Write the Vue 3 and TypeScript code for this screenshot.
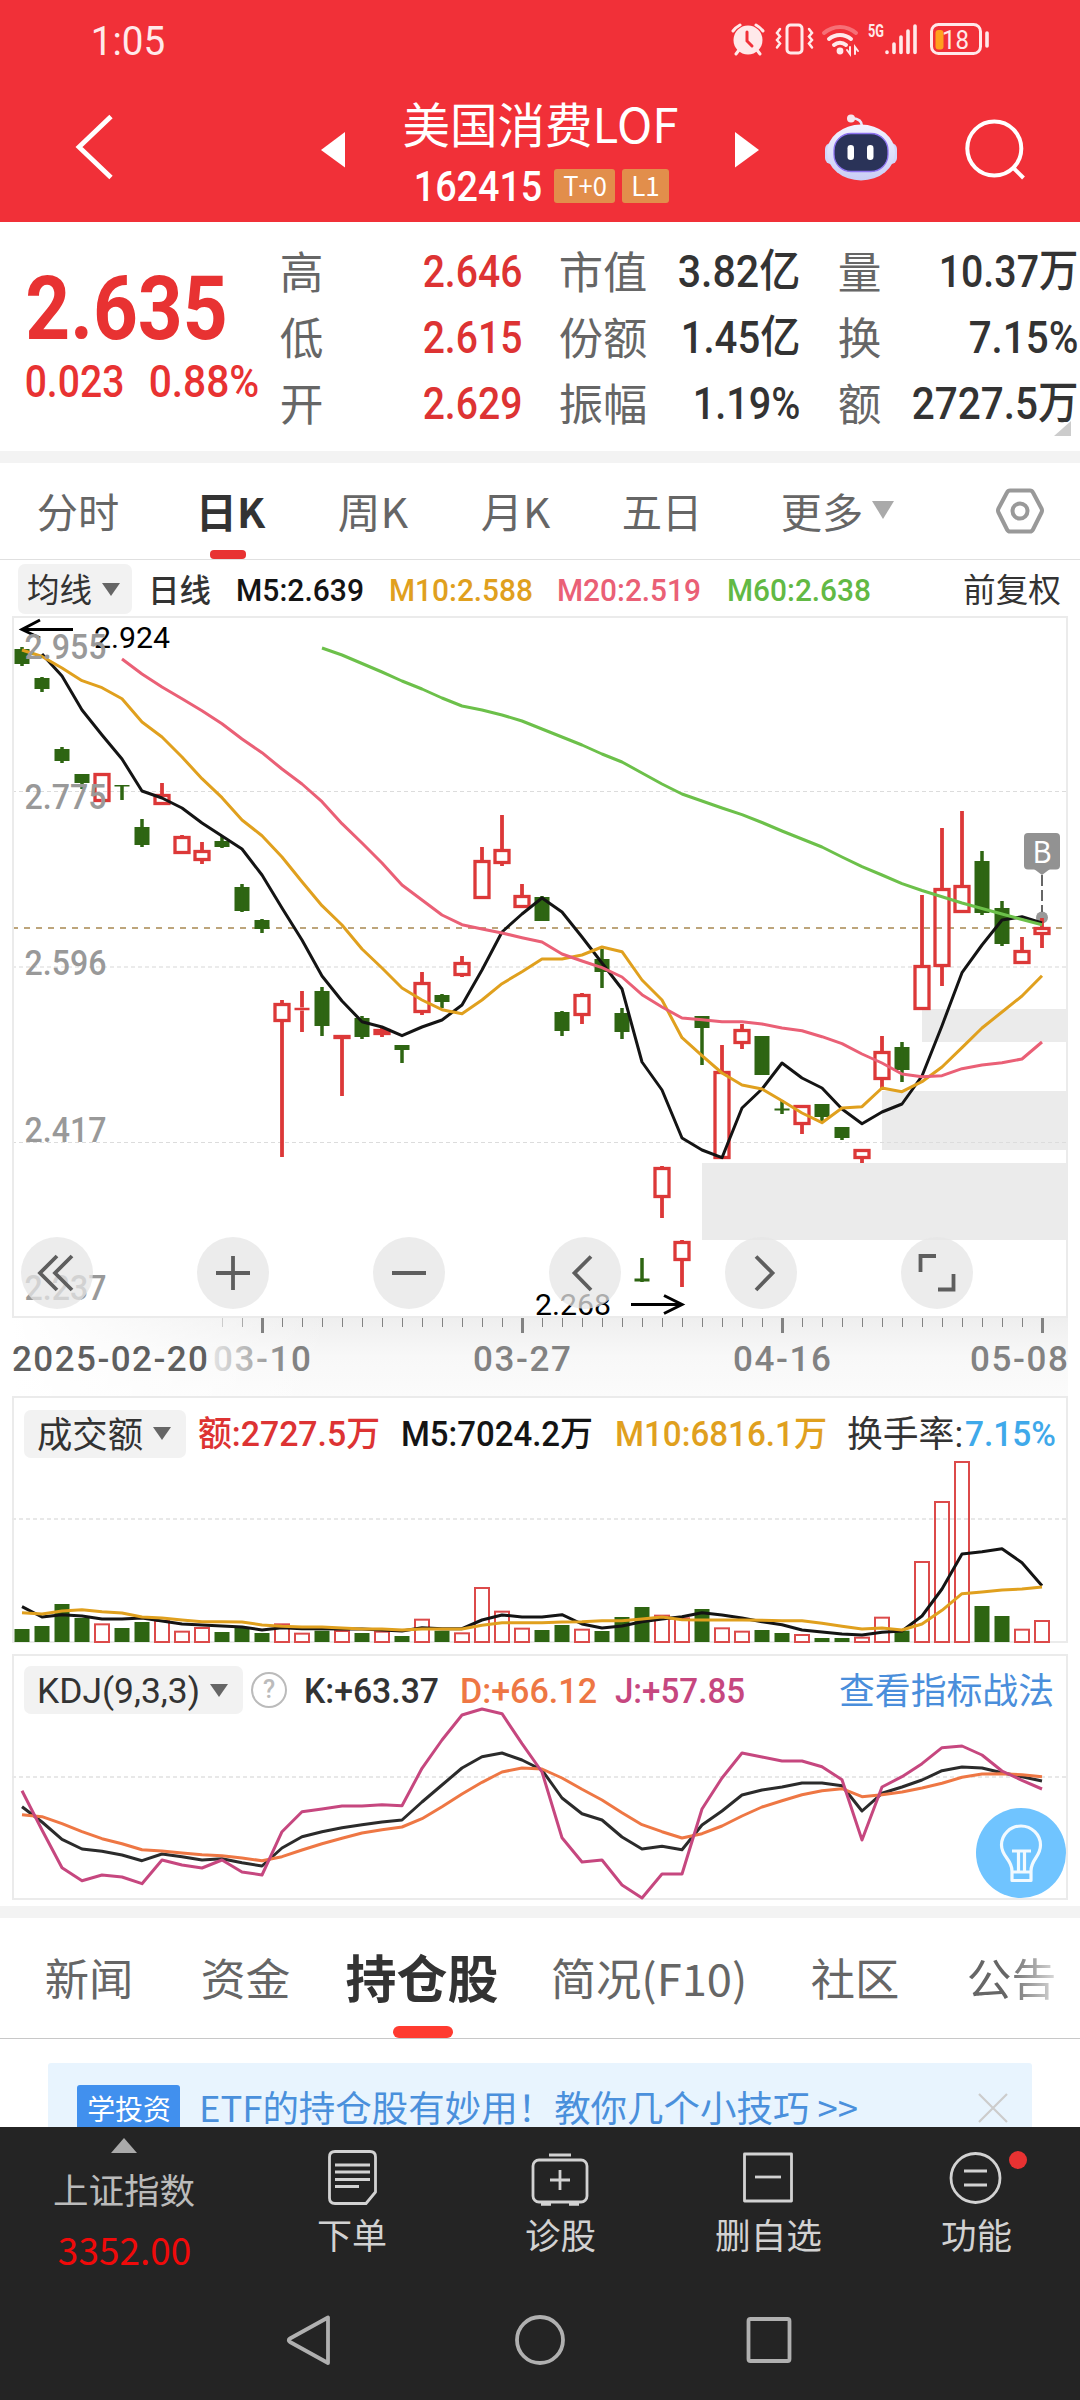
<script setup lang="ts">
import { h } from 'vue'

interface FitProps {
  t: string
  w: number
  s: number
}

// A line of text set to an exact width, like the condensed numerals of the quote face.
const Fit = (props: FitProps) => {
  const height = Math.round(props.s * 1.1)
  const bearing = props.s * 0.03
  // Ideographs sit lower on the line than figures do.
  const ideographic = /[\u4e00-\u9fff]/.test(props.t) && !/[.:]/.test(props.t)
  return h('svg', { class: 'fit', width: props.w, height }, [
    h(
      'text',
      {
        x: -bearing,
        y: height / 2 + props.s * (ideographic ? 0.398 : 0.362),
        'font-size': props.s,
        fill: 'currentColor',
        textLength: props.w + bearing * 2,
        lengthAdjust: 'spacingAndGlyphs',
      },
      props.t,
    ),
  ])
}
Fit.props = ['t', 'w', 's']

const px = (i: number): number => 22 + i * 20

const line = (values: number[], start = 0, base = 0, scale = 1): string =>
  values.map((v, i) => `${px(i + start)},${(base + v / scale).toFixed(1)}`).join(' ')

// [rising, body top, body bottom, high, low]
type Candle = [number, number, number, number, number]
const candles: Candle[] = [
  [0, 649, 664, 647, 666], [0, 678, 689, 677, 692], [0, 749, 761, 747, 763], [0, 774, 783, 774, 789],
  [1, 773, 802, 773, 802], [0, 785, 786.5, 785, 800], [0, 827, 845, 819, 847], [1, 794, 805, 783, 805],
  [1, 836, 854, 835, 854], [1, 850, 861, 842, 864], [0, 841, 847, 836, 848], [0, 887, 911, 884, 912],
  [0, 920, 929, 919, 933], [1, 1003, 1022, 1000, 1157], [1, 1007.5, 1010.5, 991, 1032], [0, 991, 1026, 987, 1036],
  [1, 1035, 1039, 1035, 1096], [0, 1018, 1037, 1016, 1039], [1, 1029, 1035, 1028, 1037], [0, 1045, 1050, 1045, 1063],
  [1, 982, 1013, 972, 1015], [0, 995, 1002, 994, 1008], [1, 962, 976, 956, 977], [1, 860, 899, 847, 899],
  [1, 849, 864, 815, 866], [1, 895, 908, 884, 908], [0, 897, 921, 896, 921], [0, 1012, 1031, 1011, 1036],
  [1, 994, 1016, 993, 1024], [0, 959, 972, 949, 988], [0, 1013, 1032, 1008, 1039], [0, 1278.5, 1281.5, 1258, 1282],
  [1, 1167, 1198, 1166, 1218], [1, 1241, 1261, 1240, 1287], [0, 1016, 1028, 1016, 1065], [1, 1071, 1159, 1045, 1159],
  [1, 1029, 1044, 1024, 1049], [0, 1036, 1075, 1036, 1075], [0, 1108.5, 1110.5, 1100, 1114], [1, 1105, 1125, 1105, 1134],
  [0, 1104, 1117, 1104, 1121], [0, 1127, 1138, 1127, 1140], [1, 1149, 1159, 1149, 1163], [1, 1051, 1080, 1036, 1090],
  [0, 1047, 1070, 1042, 1082], [1, 965, 1010, 895, 1010], [1, 888, 967, 828, 986], [1, 885, 913, 811, 913],
  [0, 861, 913, 851, 915], [0, 908, 944, 901, 946], [1, 950, 964, 937, 964], [1, 927, 935, 918, 948],
]

const ma5 = line([654, 676, 710, 735, 759, 791, 798, 808, 823, 836, 849, 875, 908, 940, 976, 1001, 1021.7, 1027, 1035.7, 1027, 1020, 1005, 970, 932, 914, 898, 912, 937, 963, 989, 1062, 1090, 1138, 1150, 1157.7, 1108, 1089, 1063, 1078, 1088, 1109, 1123.7, 1112, 1104, 1076, 1025.7, 972.7, 945, 920, 916.7, 923], 1)
const ma10 = line([650, 656.5, 668, 680.7, 687.7, 698.7, 722, 737, 757, 778.7, 797.7, 820, 835.7, 857, 881.7, 905.7, 925, 949, 968, 988, 1000, 1009.7, 1013.7, 1000, 983.7, 971.7, 959, 959, 955, 947, 951.7, 980, 1000, 1037.7, 1055.7, 1073, 1085, 1089, 1100.7, 1113, 1122.7, 1108, 1106.7, 1088, 1091.7, 1081.7, 1067, 1047.7, 1028, 1012, 996, 975.7])
const ma20 = line([659, 674, 687, 698.7, 710.7, 723.7, 739, 752.7, 769, 784, 801.7, 823.7, 843, 863, 885, 900, 915, 924.7, 929, 933, 937.7, 942, 954, 961, 967.7, 977, 994.7, 1007, 1018, 1019.7, 1021.7, 1021.7, 1024, 1028, 1030.7, 1036.7, 1043.7, 1054, 1063, 1074, 1076.7, 1075.7, 1068.7, 1065, 1062.7, 1059, 1042], 5)
const ma60 = line([648, 655, 663.5, 672, 681, 689, 698, 706, 710, 715, 721, 729, 737, 745, 754, 762, 773, 784, 794, 801, 808, 814.7, 822.5, 831, 839, 847, 857, 866.7, 875, 883.7, 890.5, 896.7, 903, 908.5, 914, 919.5, 924.7], 15)

const volTops = [717, 708, 642, 684, 700, 714, 696, 690, 722, 711, 726, 714, 729, 700, 728, 722, 720, 729, 722, 738, 686, 722, 727, 591, 662, 713, 720, 705, 716, 723, 681, 651, 674, 682, 657, 712, 722, 720, 729, 732, 744, 744, 740, 680, 722, 513, 333, 213, 648, 678, 716, 690]
const volBase = 1642
const volumes = volTops.map((v, i) => ({ up: candles[i][0] === 1, x: px(i), y: 1390 + v / 3 }))
const vol5 = line([650, 681, 674, 678, 687, 687, 684, 693, 702, 705, 708, 711, 720, 713, 716, 716, 717, 717, 720, 723, 713, 716, 716, 690, 675, 681, 681, 674, 702, 714, 708, 695, 687, 680, 668, 675, 684, 695, 704, 720, 726, 732, 735, 727, 723, 678, 597, 492, 485, 476, 518, 587], 0, 1390, 3)
const vol10 = line([668, 672, 663, 659, 665, 669, 681, 684, 690, 695, 695, 696, 705, 709, 711, 711, 714, 717, 717, 720, 717, 717, 717, 706, 698, 698, 698, 696, 695, 692, 692, 687, 681, 689, 690, 690, 690, 691, 692, 692, 700, 709, 717, 714, 720, 702, 661, 611, 606, 600, 597, 591], 0, 1390, 3)

const kLine = line([470, 516, 568, 597, 604, 615, 632, 612, 620, 630, 626, 638, 648, 594, 560, 545, 533, 524, 516, 510, 456, 405, 354, 320, 309, 330, 360, 444, 491, 510, 561, 597, 589, 599, 525, 483, 435, 420, 411, 399, 399, 407, 483, 430, 411, 390, 362, 351, 354, 368, 380, 393], 0, 1650, 3)
const dLine = line([494, 500, 521, 545, 566, 581, 599, 603, 609, 614, 617, 624, 632, 620, 600, 581, 565, 549, 539, 531, 506, 470, 432, 397, 366, 354, 357, 384, 418, 450, 488, 524, 545, 564, 551, 528, 498, 471, 452, 434, 422, 416, 440, 434, 426, 414, 400, 382, 372, 371, 374, 380], 0, 1650, 3)
const jLine = line([422, 540, 653, 692, 675, 681, 701, 630, 645, 654, 630, 666, 675, 545, 485, 477, 468, 468, 464, 467, 355, 270, 195, 177, 191, 281, 366, 563, 636, 630, 705, 744, 672, 672, 477, 384, 309, 321, 333, 333, 350, 389, 570, 411, 380, 341, 293, 288, 315, 363, 391, 417], 0, 1650, 3)

const priceMarks = [
  { t: '2.955', y: 659 },
  { t: '2.775', y: 809 },
  { t: '2.596', y: 975 },
  { t: '2.417', y: 1142 },
  { t: '2.237', y: 1300 },
]
const controls = [57, 233, 409, 585, 761, 937]
const ticks = Array.from({ length: 42 }, (_, i) => 222 + i * 20)
const isMajor = (x: number): boolean => (x - 262) % 260 === 0
const tickOpacity = (x: number): number => (x < 230 ? 0.35 : x < 250 ? 0.65 : 1)

const quotes = [
  { a: '高', b: '2.646', c: '市值', d: '3.82亿', dw: 120, e: '量', f: '10.37万', fw: 137 },
  { a: '低', b: '2.615', c: '份额', d: '1.45亿', dw: 117, e: '换', f: '7.15%', fw: 107 },
  { a: '开', b: '2.629', c: '振幅', d: '1.19%', dw: 105, e: '额', f: '2727.5万', fw: 164 },
]
const actions = [
  { t: '下单', w: 68 },
  { t: '诊股', w: 69 },
  { t: '删自选', w: 105 },
  { t: '功能', w: 69 },
]
</script>

<template>
  <div class="page">
    <header class="top">
      <div class="status">
        <Fit t="1:05" :w="72" :s="41" />
        <svg class="status-icons" width="280" height="81" viewBox="720 0 280 81" fill="none" stroke="#ffe9ea" stroke-width="3" stroke-linecap="round">
          <circle cx="748" cy="40" r="14.5" fill="#ffe9ea" stroke="none" />
          <path d="M733 31 A22 22 0 0 1 740 25 M763 31 A22 22 0 0 0 756 25 M739 50 L736 54 M757 50 L760 54" />
          <path d="M747 32 V41 L752 46" stroke="#f13038" />
          <rect x="787" y="25" width="15" height="28" rx="3.500" />
          <path d="M780 29 l-3 4 l3 3.500 l-3 3.500 l3 3.500 l-3 4 M809 29 l3 4 l-3 3.500 l3 3.500 l-3 3.500 l3 4" stroke-width="2.500" />
          <path d="M824 33 A24 24 0 0 1 856 33" opacity=".35" stroke-width="4" />
          <path d="M829 39 A17 17 0 0 1 851 39 M834 45 A9 9 0 0 1 846 45" stroke-width="4" />
          <circle cx="840" cy="51" r="3.400" fill="#ffe9ea" stroke="none" />
          <path d="M850 47 V54 L847 50 M855 54 V47 L858 51" stroke-width="2" />
          <text x="868" y="37" font-size="18" font-weight="700" textLength="16" lengthAdjust="spacingAndGlyphs" fill="#ffe9ea" stroke="none">5G</text>
          <path d="M887 52 V52.500 M894 44 V52.500 M901 37 V52.500 M908 31 V52.500 M915 26 V52.500" stroke-width="3.600" />
          <rect x="931.500" y="24.500" width="49" height="29" rx="7" />
          <rect x="935.500" y="30" width="8" height="19.500" rx="3" fill="#ffa01e" stroke="none" />
          <text x="942" y="49" font-size="25" textLength="27" lengthAdjust="spacingAndGlyphs" fill="#ffe9ea" stroke="none">18</text>
          <path d="M987 33 V46" stroke-width="3.600" />
        </svg>
      </div>
      <nav class="bar">
        <svg width="180" height="141" viewBox="0 81 180 141"><path d="M111 116.500 L79 147 L111 177.500" fill="none" stroke="#fff" stroke-width="4.800" /></svg>
        <svg width="200" height="141" viewBox="180 81 200 141"><path d="M321 150 L345 132 V167.500Z" fill="#fff" /></svg>
        <div class="title">
          <div class="name han"><Fit t="美国消费LOF" :w="273" :s="48" /></div>
          <div class="code">
            <Fit t="162415" :w="126" :s="42" />
            <span class="badge han"><Fit t="T+0" :w="42" :s="27" /></span>
            <span class="badge level han"><Fit t="L1" :w="27" :s="27" /></span>
          </div>
        </div>
        <svg width="100" height="141" viewBox="700 81 100 141"><path d="M759 150 L735 132 V167.500Z" fill="#fff" /></svg>
        <svg width="120" height="141" viewBox="800 81 120 141">
          <defs>
            <linearGradient id="shell" x1="0" y1="0" x2="0" y2="1">
              <stop offset="0" stop-color="#f3f3ff" />
              <stop offset="1" stop-color="#c9cdf6" />
            </linearGradient>
          </defs>
          <path d="M862 126 Q862 119 852 118" fill="none" stroke="#e9e9fb" stroke-width="2.500" />
          <circle cx="851" cy="118.500" r="4" fill="#f6e6ee" />
          <rect x="825" y="143" width="12" height="21" rx="6" fill="#d3d6fa" />
          <rect x="885" y="143" width="12" height="21" rx="6" fill="#d3d6fa" />
          <ellipse cx="861" cy="152.500" rx="34" ry="28" fill="url(#shell)" />
          <rect x="834" y="133.500" width="54" height="38" rx="17" fill="#2a3358" stroke="#8d73f0" stroke-width="1.300" />
          <rect x="847.500" y="145" width="6.500" height="15" rx="3.200" fill="#fff" />
          <rect x="867" y="145" width="6.500" height="15" rx="3.200" fill="#fff" />
        </svg>
        <svg width="160" height="141" viewBox="920 81 160 141"><g fill="none" stroke="#fff" stroke-width="4"><circle cx="994.300" cy="148.500" r="27" /><path d="M1013 167.500 L1023.500 178" /></g></svg>
      </nav>
    </header>

    <section class="quote">
      <div class="price">
        <b><Fit t="2.635" :w="197" :s="89" /></b>
        <div class="change"><Fit t="0.023" :w="97" :s="45" /><Fit t="0.88%" :w="108" :s="45" /></div>
      </div>
      <div class="figures">
        <div v-for="q in quotes" :key="q.a" class="row">
          <Fit class="label" :t="q.a" :w="41" :s="44" />
          <Fit class="up end" :t="q.b" :w="97" :s="45" />
          <Fit class="label" :t="q.c" :w="86" :s="44" />
          <Fit class="end" :t="q.d" :w="q.dw" :s="45" />
          <Fit class="label" :t="q.e" :w="41" :s="44" />
          <Fit class="end" :t="q.f" :w="q.fw" :s="45" />
        </div>
      </div>
      <i class="fold"></i>
    </section>
    <div class="band"></div>

    <nav class="periods han">
      <Fit t="分时" :w="80" :s="41" />
      <b class="on"><Fit t="日K" :w="67" :s="41" /></b>
      <Fit t="周K" :w="68" :s="41" />
      <Fit t="月K" :w="67" :s="41" />
      <Fit t="五日" :w="78" :s="41" />
      <Fit t="更多" :w="80" :s="41" />
      <svg width="24" height="20"><path d="M0 0 H22 L11 18Z" fill="#aaa" /></svg>
      <svg class="gear" width="52" height="50" fill="none" stroke="#999" stroke-width="4"><path d="M16 4.500 H36 Q38 4.500 39 6.500 L47.500 22.500 Q48.500 24.500 47.500 26.500 L39 43.500 Q38 45.500 36 45.500 H16 Q14 45.500 13 43.500 L4.500 26.500 Q3.500 24.500 4.500 22.500 L13 6.500 Q14 4.500 16 4.500Z" /><circle cx="26" cy="25" r="7.500" /></svg>
    </nav>

    <div class="averages">
      <span class="pill"><Fit t="均线" :w="63" :s="33" /><svg width="18" height="13"><path d="M0 0 H18 L9 13Z" fill="#666" /></svg></span>
      <Fit class="ink" t="日线" :w="61" :s="32" />
      <Fit class="black" t="M5:2.639" :w="126" :s="32" />
      <Fit class="gold" t="M10:2.588" :w="142" :s="32" />
      <Fit class="pink" t="M20:2.519" :w="142" :s="32" />
      <Fit class="green" t="M60:2.638" :w="142" :s="32" />
      <Fit class="ink regular" t="前复权" :w="96" :s="33" />
    </div>

    <svg class="chart" width="1080" height="780" viewBox="0 616 1080 780">
      <defs>
        <linearGradient id="shade" x1="0" y1="0" x2="0" y2="1">
          <stop offset="0" stop-color="#eee" />
          <stop offset=".5" stop-color="#f8f8f8" />
          <stop offset="1" stop-color="#fbfbfb" />
        </linearGradient>
        <linearGradient id="veil" x1="0" y1="0" x2="1" y2="0">
          <stop offset="0" stop-color="#fff" />
          <stop offset="1" stop-color="#fff" stop-opacity="0" />
        </linearGradient>
        <linearGradient id="dateFade" gradientUnits="userSpaceOnUse" x1="212" y1="0" x2="290" y2="0">
          <stop offset="0" stop-color="#e4e4e4" />
          <stop offset="1" stop-color="#828282" />
        </linearGradient>
      </defs>
      <rect x="12" y="1317" width="1056" height="79" fill="url(#shade)" />
      <rect x="12" y="1317" width="320" height="79" fill="url(#veil)" />

      <path d="M922 1009 H1068 V1042 H922Z M882 1091 H1068 V1150 H882Z M702 1163 H1068 V1240 H702Z" fill="#ebebeb" />
      <g fill="none" stroke="#dcdcdc" stroke-dasharray="4 3">
        <path d="M12 791.500 H1066 M12 1142.500 H1066" />
        <path d="M12 967 H1066" stroke="#ebebeb" stroke-width="2" />
      </g>
      <path d="M12 928 H1064" stroke="#bda57b" stroke-width="2" stroke-dasharray="6 6" />
      <rect x="13" y="617" width="1054" height="700" fill="none" stroke="#ebebeb" stroke-width="2" />

      <circle cx="1042" cy="917.500" r="6" fill="#999" />
      <template v-for="(c, i) in candles" :key="i">
        <g v-if="c[0]" stroke="#dc3838" fill="none">
          <path :d="`M${px(i)} ${c[3]} V${c[1]} M${px(i)} ${c[2]} V${c[4]}`" stroke-width="3.800" />
          <rect v-if="c[2] - c[1] > 3" :x="px(i) - 7" :y="c[1] + 1.5" width="14" :height="Math.max(c[2] - c[1] - 3, 0.5)" stroke-width="3.300" />
          <path v-else :d="`M${px(i) - 7.5} ${(c[1] + c[2]) / 2} h15`" stroke-width="2.500" />
        </g>
        <g v-else fill="#2e6512">
          <rect :x="px(i) - 7.5" :y="c[1]" width="15" :height="c[2] - c[1]" />
          <rect :x="px(i) - 1.75" :y="c[3]" width="3.5" :height="c[4] - c[3]" />
        </g>
      </template>

      <g fill="none" stroke-width="3" stroke-linejoin="round">
        <polyline :points="ma5" stroke="#141414" />
        <polyline :points="ma10" stroke="#e0a01e" />
        <polyline :points="ma20" stroke="#ea6076" />
        <polyline :points="ma60" stroke="#6cc04a" />
      </g>

      <path d="M1042 875 V912" stroke="#666" stroke-width="2" stroke-dasharray="11 4" />
      <rect x="1024" y="833" width="36" height="36.500" rx="4" fill="#929292" />
      <path d="M1034 869 H1050 L1042 875Z" fill="#929292" />
      <text class="han" x="1032.500" y="863" font-size="30" textLength="19" lengthAdjust="spacingAndGlyphs" fill="#fff">B</text>

      <g fill="none" stroke="#000" stroke-width="3">
        <path d="M22 629.500 H73 M40 620 L22 629.500 L40 638" />
        <path d="M631 1304.500 H682 M664 1295.500 L682 1304.500 L664 1313.500" />
      </g>
      <text x="94" y="648" font-size="30" textLength="76" lengthAdjust="spacingAndGlyphs">2.924</text>
      <text x="535" y="1315" font-size="30" textLength="76" lengthAdjust="spacingAndGlyphs">2.268</text>
      <g font-size="35" font-weight="500" fill="#999">
        <text v-for="m in priceMarks" :key="m.t" x="24.500" :y="m.y" textLength="82" lengthAdjust="spacingAndGlyphs">{{ m.t }}</text>
      </g>

      <circle v-for="x in controls" :key="x" :cx="x" cy="1273" r="36" fill="#e5e5e5" fill-opacity=".75" />
      <g fill="none" stroke="#5e5e5e" stroke-width="3.800">
        <path d="M57 1256 L40 1273 L57 1290 M72 1256 L55 1273 L72 1290" />
        <path d="M216 1273 H250 M233 1256 V1290 M392 1273 H426" />
        <path d="M591 1256.500 L574.500 1273 L591 1290 M756 1256.500 L772.500 1273 L756 1290" />
        <path d="M920.500 1272 V1256 H936 M938 1289.500 H953.500 V1274" />
      </g>

      <g fill="#828282">
        <rect v-for="x in ticks" :key="x" :x="isMajor(x) ? x - 1 : x" y="1318" :width="isMajor(x) ? 3 : 1" :height="isMajor(x) ? 15 : 9" :opacity="tickOpacity(x)" />
      </g>
      <g font-size="35" font-weight="500" fill="#828282">
        <text x="12" y="1371" textLength="196" fill="#5f5f5f">2025-02-20</text>
        <text x="213" y="1371" textLength="98" fill="url(#dateFade)">03-10</text>
        <text x="473" y="1371" textLength="98">03-27</text>
        <text x="733" y="1371" textLength="98">04-16</text>
        <text x="970" y="1371" textLength="98">05-08</text>
      </g>
    </svg>

    <section class="panel volume">
      <div class="head">
        <span class="pill wide"><Fit t="成交额" :w="104" :s="36" /><svg width="18" height="13"><path d="M0 0 H18 L9 13Z" fill="#666" /></svg></span>
        <Fit class="red" t="额:2727.5万" :w="180" :s="35" />
        <Fit class="black" t="M5:7024.2万" :w="190" :s="35" />
        <Fit class="gold" t="M10:6816.1万" :w="210" :s="35" />
        <Fit class="ink regular" t="换手率:" :w="114" :s="36" />
        <Fit class="sky" t="7.15%" :w="89" :s="35" />
      </div>
      <svg width="1080" height="186" viewBox="0 1459 1080 186">
        <path d="M12 1519 H1066" stroke="#e8e8e8" stroke-width="2" stroke-dasharray="4 3" />
        <template v-for="v in volumes" :key="v.x">
          <rect v-if="v.up" :x="v.x - 7" :y="v.y + 1" width="14" :height="volBase - v.y - 1" fill="none" stroke="#dc4a4a" stroke-width="2" />
          <rect v-else :x="v.x - 7.500" :y="v.y" width="15" :height="volBase - v.y" fill="#2e6512" />
        </template>
        <g fill="none" stroke-width="3" stroke-linejoin="round">
          <polyline :points="vol5" stroke="#141414" />
          <polyline :points="vol10" stroke="#e0a01e" />
        </g>
      </svg>
    </section>

    <section class="panel kdj">
      <svg class="plot" width="1080" height="246" viewBox="0 1654 1080 246">
        <path d="M12 1777 H1066" stroke="#e8e8e8" stroke-width="2" stroke-dasharray="4 3" />
        <g fill="none" stroke-width="3" stroke-linejoin="round">
          <polyline :points="kLine" stroke="#2b2b2b" />
          <polyline :points="dLine" stroke="#ee7744" />
          <polyline :points="jLine" stroke="#c6477f" />
        </g>
        <circle cx="1021" cy="1853" r="45" fill="#70c4ff" />
        <g fill="none" stroke="#f2faff" stroke-width="3.200" stroke-linejoin="round">
          <path d="M1012 1871 C1012 1859 1001.500 1857 1001.500 1845 A19.500 19 0 0 1 1040.500 1845 C1040.500 1857 1031 1859 1031 1871 V1880.500 H1012Z M1012 1872 H1031" />
          <path d="M1012 1851 H1031 M1018.500 1851 V1871 M1024.500 1851 V1871" />
        </g>
      </svg>
      <div class="head">
        <span class="pill wider"><Fit t="KDJ(9,3,3)" :w="161" :s="35" /><svg width="18" height="13"><path d="M0 0 H18 L9 13Z" fill="#666" /></svg></span>
        <span class="help">?</span>
        <Fit class="ink" t="K:+63.37" :w="133" :s="35" />
        <Fit class="orange" t="D:+66.12" :w="135" :s="35" />
        <Fit class="magenta" t="J:+57.85" :w="128" :s="35" />
        <Fit class="link" t="查看指标战法" :w="213" :s="36" />
      </div>
    </section>
    <div class="band second"></div>

    <nav class="sections han">
      <Fit t="新闻" :w="86" :s="44" />
      <Fit t="资金" :w="87" :s="44" />
      <b class="on"><Fit t="持仓股" :w="150" :s="51" /></b>
      <Fit t="简况(F10)" :w="194" :s="44" />
      <Fit t="社区" :w="86" :s="44" />
      <Fit class="fading" t="公告" :w="87" :s="44" />
    </nav>

    <div class="promo-wrap">
      <div class="promo han">
        <span class="tag"><Fit t="学投资" :w="82" :s="28" /></span>
        <Fit t="ETF的持仓股有妙用！教你几个小技巧 &gt;&gt;" :w="657" :s="36" />
        <svg width="30" height="30"><path d="M1 1 L29 29 M29 1 L1 29" stroke="#ccc" stroke-width="2.200" /></svg>
      </div>
    </div>

    <footer class="dock han">
      <div class="actions">
        <div class="index">
          <svg width="26" height="15"><path d="M13 0 L26 15 H0Z" fill="#aaa" /></svg>
          <Fit class="index-name" t="上证指数" :w="140" :s="35" />
          <Fit class="index-value" t="3352.00" :w="131" :s="38" />
        </div>
        <div v-for="(a, i) in actions" :key="a.t" class="action">
          <svg width="60" height="60" fill="none" stroke="#d2d2d2" stroke-width="2.800" stroke-linejoin="round">
            <g v-if="i === 0">
              <path d="M13 4.500 H48 Q53.500 4.500 53.500 10 V45 L44 56.500 H13 Q7.500 56.500 7.500 51 V10 Q7.500 4.500 13 4.500Z" />
              <path d="M13 18 H48 M13 25 H48 M13 32.500 H48 M13 39.500 H37" />
            </g>
            <g v-else-if="i === 1">
              <rect x="3" y="13" width="54" height="42" rx="6" />
              <path d="M19 8 H41 M30 23 V43 M20 33 H40" />
              <path d="M11 57 H21 M39 57 H49" stroke-width="3.500" />
            </g>
            <g v-else-if="i === 2">
              <rect x="6.500" y="7" width="47" height="47" />
              <path d="M17 30 H43" />
            </g>
            <g v-else>
              <circle cx="29.500" cy="31" r="24.500" />
              <path d="M18 24 H41 M18 38 H41" />
            </g>
          </svg>
          <Fit :t="a.t" :w="a.w" :s="35" />
          <i v-if="i === 3" class="dot"></i>
        </div>
      </div>
      <svg class="system" width="1080" height="150" viewBox="0 2250 1080 150" fill="none" stroke="#b0b0b0" stroke-width="3.800" stroke-linejoin="round">
        <path d="M328 2317.500 V2363 L290 2342 Q287.500 2340 290 2338.500Z" />
        <circle cx="540" cy="2340" r="23" />
        <rect x="748.500" y="2319" width="41" height="42" rx="2" />
      </svg>
    </footer>
  </div>
</template>

<style>
body {
  background: #fff;
}
</style>

<style scoped>
.page {
  display: flex;
  flex-direction: column;
  width: 1080px;
  height: 2400px;
  overflow: hidden;
  background: #fff;
  font-family: Roboto, 'Noto Sans CJK SC', sans-serif;
  color: #333;
}
.page svg {
  display: block;
  flex: none;
  overflow: visible;
}
.han {
  font-family: 'Noto Sans CJK SC', sans-serif;
}
.top {
  height: 222px;
  background: #f13038;
  color: #fff;
}
.status {
  display: flex;
  align-items: center;
  justify-content: space-between;
  height: 81px;
  padding: 0 80px 0 92px;
  color: #ffe9ea;
}
.bar {
  display: flex;
  height: 141px;
}
.title {
  width: 320px;
}
.name {
  display: flex;
  align-items: center;
  height: 85px;
  padding-left: 24px;
}
.code {
  display: flex;
  align-items: center;
  height: 38px;
  padding: 1px 0 0 35px;
  box-sizing: border-box;
  font-weight: 500;
}
.badge {
  display: flex;
  align-items: center;
  justify-content: center;
  width: 61px;
  height: 34px;
  margin-left: 13px;
  border-radius: 3px;
  background: #e28e4b;
  font-weight: 400;
}
.badge.level {
  width: 47px;
  margin-left: 7px;
}
.quote {
  position: relative;
  display: grid;
  grid-template-columns: 281px 1fr;
  height: 229px;
  font-weight: 500;
}
.price {
  display: grid;
  grid-template-rows: 107px 42px;
  align-content: start;
  align-items: center;
  padding: 31px 0 0 28px;
  color: #e83232;
}
.change {
  display: flex;
  align-items: center;
  gap: 27px;
  margin-left: -2px;
}
.figures {
  padding-top: 16px;
}
.row {
  display: grid;
  grid-template-columns: 100px 139.5px 39.5px 100px 139px 40px 60px 178px;
  align-items: center;
  height: 66px;
}
.row > :nth-child(1) { grid-column: 1; }
.row > :nth-child(2) { grid-column: 2; }
.row > :nth-child(3) { grid-column: 4; }
.row > :nth-child(4) { grid-column: 5; }
.row > :nth-child(5) { grid-column: 7; }
.row > :nth-child(6) { grid-column: 8; }
.label {
  color: #666;
  font-weight: 400;
}
.end {
  justify-self: end;
}
.up,
.red {
  color: #dd3333;
}
.fold {
  position: absolute;
  right: 9px;
  bottom: 15px;
  width: 17px;
  height: 15px;
  background: #ccc;
  clip-path: polygon(100% 0, 100% 100%, 0 100%);
}
.band {
  height: 12px;
  background: #f3f3f3;
}
.periods {
  display: grid;
  grid-template-columns: 159px 142px 143px 141px 159px 90px 122px auto;
  align-items: center;
  box-sizing: border-box;
  height: 97px;
  padding-left: 38px;
  border-bottom: 1px solid #e0e0e0;
  color: #666;
}
.on {
  position: relative;
  color: #333;
}
.periods .on::after {
  content: '';
  position: absolute;
  left: 13px;
  top: 61px;
  width: 36px;
  height: 9px;
  border-radius: 4px;
  background: #e83232;
}
.averages {
  display: grid;
  grid-template-columns: 131px 88px 153px 168px 170px 236px auto;
  align-items: center;
  height: 57px;
  padding: 1px 0 0 18px;
  box-sizing: border-box;
  margin-bottom: -1px;
  font-weight: 500;
}
.pill {
  display: flex;
  align-items: center;
  gap: 11px;
  width: 104px;
  height: 50px;
  padding-left: 10px;
  border-radius: 7px;
  background: #f2f2f2;
  font-weight: 400;
}
.pill.wide {
  width: 148px;
  height: 48px;
  padding-left: 14px;
}
.pill.wider {
  width: 205px;
  height: 48px;
  padding-left: 14px;
}
.ink { color: #333; }
.black { color: #141414; }
.gold { color: #e0a01e; }
.pink { color: #ea6076; }
.green { color: #62b944; }
.sky { color: #3fa9ea; }
.orange { color: #ee7744; }
.magenta { color: #c6477f; }
.link { color: #4a8edb; }
.regular,
.link {
  font-weight: 400;
}
.panel {
  position: relative;
  box-sizing: border-box;
  flex: none;
  font-weight: 500;
}
.panel::before {
  content: '';
  position: absolute;
  inset: 0 12px;
  border: 2px solid #ebebeb;
}
.panel .head,
.panel > svg {
  position: relative;
}
.volume {
  height: 247px;
}
.head {
  display: grid;
  align-items: center;
  height: 48px;
  padding-left: 24px;
}
.volume .head {
  grid-template-columns: 175px 203px 214px 232px 118px auto;
  padding-top: 12px;
  height: 51px;
  align-items: center;
}
.kdj {
  height: 246px;
  margin-top: 11px;
}
.kdj .plot {
  position: absolute;
  left: 0;
  top: 0;
}
.kdj .head {
  grid-template-columns: 227px 54px 156px 155px 224px auto;
  padding-top: 12px;
}
.help {
  box-sizing: border-box;
  width: 36px;
  height: 36px;
  border: 2.5px solid #bbb;
  border-radius: 50%;
  color: #bbb;
  font-size: 25px;
  line-height: 31px;
  text-align: center;
}
.band.second {
  margin-top: 6px;
}
.sections {
  display: grid;
  grid-template-columns: 156px 145px 205px 260px 156px auto;
  align-items: center;
  box-sizing: border-box;
  height: 121px;
  padding-left: 46px;
  border-bottom: 1px solid #c8c8c8;
  color: #666;
}
.sections .on::after {
  content: '';
  position: absolute;
  left: 46px;
  top: 76px;
  width: 60px;
  height: 12px;
  border-radius: 6px;
  background: #ff3b30;
}
.fading {
  -webkit-mask-image: linear-gradient(90deg, #000 45%, rgba(0, 0, 0, 0.25));
  mask-image: linear-gradient(90deg, #000 45%, rgba(0, 0, 0, 0.25));
}
.promo-wrap {
  height: 88px;
  padding: 24px 48px 0;
  box-sizing: border-box;
  overflow: hidden;
}
.promo {
  display: grid;
  grid-template-columns: 123px 778px auto;
  align-items: center;
  height: 90px;
  padding-left: 29px;
  border-radius: 3px;
  background: #e8f4fe;
  color: #4a90dc;
}
.tag {
  display: flex;
  align-items: center;
  justify-content: center;
  width: 103px;
  height: 46px;
  border-radius: 3px 3px 0 0;
  background: #4190ee;
  color: #fff;
}
.dock {
  flex: none;
  height: 273px;
  background: #242424;
  color: #d2d2d2;
}
.actions {
  display: grid;
  grid-template-columns: 248px repeat(4, 208px);
  height: 123px;
}
.index {
  display: flex;
  flex-direction: column;
  align-items: center;
  padding-top: 11px;
}
.index-name {
  margin-top: 18px;
  color: #bbb;
}
.index-value {
  margin-top: 20px;
  color: #f00a0a;
}
.action {
  position: relative;
  display: flex;
  flex-direction: column;
  align-items: center;
  padding-top: 20px;
}
.action > svg:nth-child(2) {
  margin-top: 9px;
}
.dot {
  position: absolute;
  left: 137px;
  top: 24px;
  width: 18px;
  height: 18px;
  border-radius: 50%;
  background: #e83232;
}
</style>
